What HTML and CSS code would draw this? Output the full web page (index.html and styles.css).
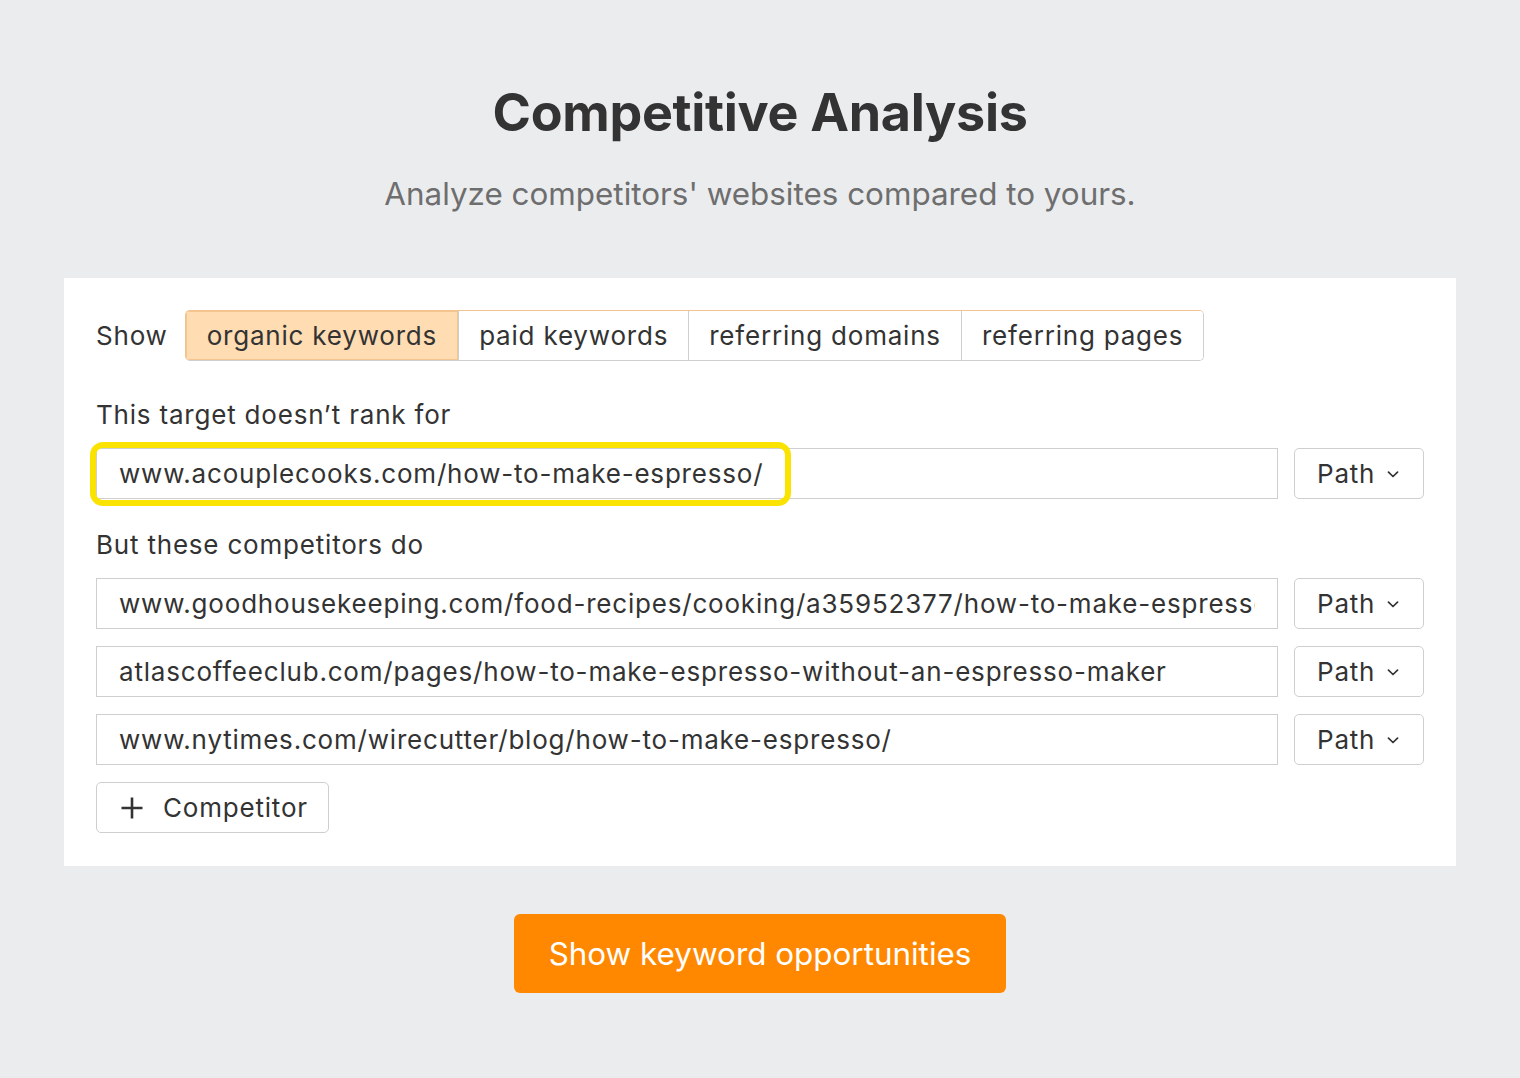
FILE: index.html
```html
<!DOCTYPE html>
<html lang="en">
<head>
<meta charset="utf-8">
<title>Competitive Analysis</title>
<link rel="stylesheet" href="styles.css">
</head>
<body>
<header class="hero">
  <h1 class="title">Competitive Analysis</h1>
  <p class="subtitle">Analyze competitors' websites compared to yours.</p>
</header>

<main class="card">
  <div class="show-row">
    <span class="show-label">Show</span>
    <div class="tabs">
      <span class="tab tab-active">organic keywords</span>
      <span class="tab">paid keywords</span>
      <span class="tab">referring domains</span>
      <span class="tab">referring pages</span>
    </div>
  </div>

  <div class="label label-first">This target doesn’t rank for</div>
  <div class="row">
    <div class="field field-highlighted">
      <span class="field-text">www.acouplecooks.com/how-to-make-espresso/</span>
      <span class="highlight"></span>
    </div>
    <div class="mode">Path<svg class="chev" width="12" height="7" viewBox="0 0 12 7"><path d="M1.5 1.2 L6 5.5 L10.5 1.2" fill="none" stroke="#333" stroke-width="1.7" stroke-linecap="round" stroke-linejoin="round"/></svg></div>
  </div>

  <div class="label label-second">But these competitors do</div>
  <div class="rows">
    <div class="row">
      <div class="field field-clip"><span class="field-text">www.goodhousekeeping.com/food-recipes/cooking/a35952377/how-to-make-espresso-at-home/</span></div>
      <div class="mode">Path<svg class="chev" width="12" height="7" viewBox="0 0 12 7"><path d="M1.5 1.2 L6 5.5 L10.5 1.2" fill="none" stroke="#333" stroke-width="1.7" stroke-linecap="round" stroke-linejoin="round"/></svg></div>
    </div>
    <div class="row">
      <div class="field field-clip"><span class="field-text">atlascoffeeclub.com/pages/how-to-make-espresso-without-an-espresso-maker</span></div>
      <div class="mode">Path<svg class="chev" width="12" height="7" viewBox="0 0 12 7"><path d="M1.5 1.2 L6 5.5 L10.5 1.2" fill="none" stroke="#333" stroke-width="1.7" stroke-linecap="round" stroke-linejoin="round"/></svg></div>
    </div>
    <div class="row">
      <div class="field field-clip"><span class="field-text">www.nytimes.com/wirecutter/blog/how-to-make-espresso/</span></div>
      <div class="mode">Path<svg class="chev" width="12" height="7" viewBox="0 0 12 7"><path d="M1.5 1.2 L6 5.5 L10.5 1.2" fill="none" stroke="#333" stroke-width="1.7" stroke-linecap="round" stroke-linejoin="round"/></svg></div>
    </div>
    <div class="add-row">
      <button class="add-btn" type="button"><svg class="plus" width="24" height="24" viewBox="0 0 24 24"><path d="M12 1.5 V22.5 M1.5 12 H22.5" stroke="#333" stroke-width="2.6" fill="none"/></svg><span>Competitor</span></button>
    </div>
  </div>
</main>

<div class="cta-wrap">
  <button class="cta" type="button">Show keyword opportunities</button>
</div>
</body>
</html>
```

FILE: styles.css
```css
* { box-sizing: border-box; }

html, body {
  margin: 0;
  padding: 0;
}

body {
  background: #ebecee;
  font-family: Inter, "Noto Sans", "Liberation Sans", sans-serif;
  color: #333;
  min-height: 1078px;
}

.hero {
  padding-top: 81px;
  text-align: center;
}

.title {
  margin: 0;
  font-size: 52px;
  line-height: 64px;
  font-weight: 700;
  color: #333;
  letter-spacing: -0.3px;
}

.subtitle {
  margin: 29px 0 0;
  font-size: 31.4px;
  line-height: 40px;
  color: #6e6e6e;
}

.card {
  margin: 64px 64px 0;
  background: #fff;
  padding: 32px 32px 33px;
  font-size: 26px;
  letter-spacing: 0.8px;
}

.show-row {
  display: flex;
  align-items: center;
  gap: 17px;
}

.show-label {
  line-height: 34px;
}

.tabs {
  display: flex;
  border: 1px solid #cfcfcf;
  border-radius: 5px;
  overflow: hidden;
  height: 51px;
}

.tab {
  display: flex;
  align-items: center;
  padding: 0 20px;
  border-left: 1px solid #cfcfcf;
  background: #fff;
}

.tab:first-child {
  border-left: none;
  padding: 0 21px 0 21px;
}

.tab-active {
  background: #ffdcb2;
  box-shadow: inset 0 0 0 1px #f5c590;
}

.tabs:has(.tab-active:first-child) {
  border-color: #f1c48f #cfcfcf #cfcfcf #f1c48f;
}

.label {
  line-height: 34px;
}

.label-first { margin: 37px 0 16px; }
.label-second { margin: 29px 0 16px; }

.rows {
  display: flex;
  flex-direction: column;
  gap: 17px;
}

.row {
  display: flex;
  gap: 16px;
}

.field {
  position: relative;
  flex: 1;
  height: 51px;
  border: 1px solid #cfcfcf;
  padding: 0 22px;
  display: flex;
  align-items: center;
  min-width: 0;
}

.field-clip { overflow: hidden; }

.field-text {
  display: block;
  white-space: nowrap;
  overflow: hidden;
  width: 100%;
}

.highlight {
  position: absolute;
  left: -7px;
  top: -7px;
  width: 701px;
  height: 64px;
  border: 6px solid #fae300;
  border-radius: 13px;
  pointer-events: none;
}

.mode {
  flex: none;
  width: 130px;
  height: 51px;
  border: 1px solid #cfcfcf;
  border-radius: 5px;
  display: flex;
  align-items: center;
  padding: 0 20px 0 22px;
  gap: 12px;
}

.chev { flex: none; margin-top: 2px; }

.add-row { display: flex; }

.add-btn {
  display: flex;
  align-items: center;
  gap: 19px;
  height: 51px;
  padding: 0 20px 0 23px;
  background: #fff;
  border: 1px solid #cfcfcf;
  border-radius: 5px;
  font-family: inherit;
  font-size: 26px;
  letter-spacing: 0.8px;
  color: #333;
}

.plus { flex: none; }

.cta-wrap {
  display: flex;
  justify-content: center;
  margin-top: 48px;
}

.cta {
  height: 79px;
  width: 492px;
  background: #ff8800;
  color: #fff;
  border: none;
  border-radius: 6px;
  font-family: inherit;
  font-size: 31.4px;
}
```
